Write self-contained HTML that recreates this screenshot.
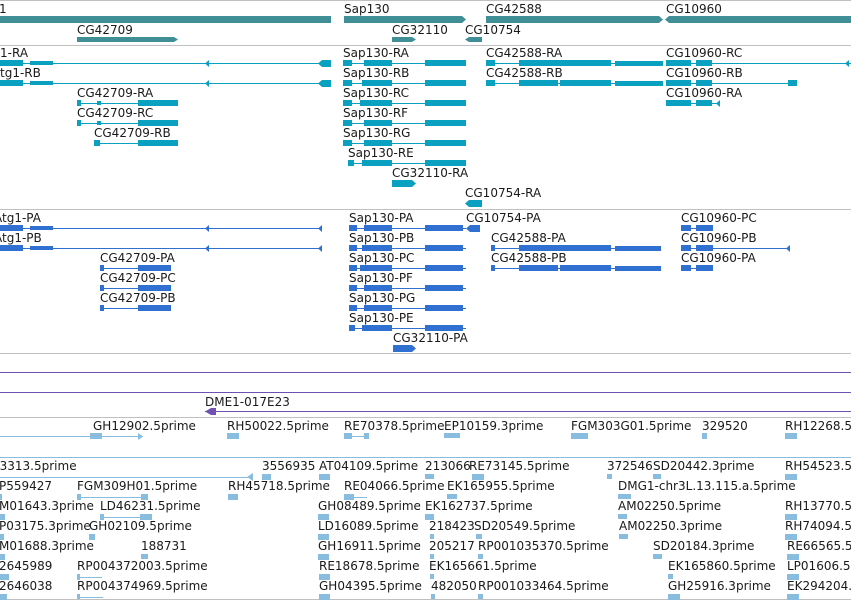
<!DOCTYPE html>
<html><head><meta charset="utf-8"><style>
html,body{margin:0;padding:0;background:#fff;width:851px;height:601px;overflow:hidden}
svg{display:block}
text{font-family:"DejaVu Sans","Liberation Sans",sans-serif;font-size:12px;fill:#1a1a1a}
.g{fill:#418f96}.t1{fill:#0aa0c0}.t2{fill:#3070d0}.e{fill:#88bde0}.p{fill:#7050b0}
</style></head><body>
<svg width="851" height="601" viewBox="0 0 851 601" xmlns="http://www.w3.org/2000/svg">
<g fill="#c0c0c0">
<rect x="0" y="0" width="851" height="1"/><rect x="0" y="45" width="851" height="1"/>
<rect x="0" y="209" width="851" height="1"/><rect x="0" y="353" width="851" height="1"/>
<rect x="0" y="417" width="851" height="1"/><rect x="0" y="599" width="851" height="1"/>
</g>
<!-- genes -->
<text x="-1" y="13">1</text><text x="344" y="13">Sap130</text><text x="486" y="13">CG42588</text><text x="666" y="13">CG10960</text>
<text x="77" y="34">CG42709</text><text x="392" y="34">CG32110</text><text x="465" y="34">CG10754</text>
<g class="g">
<rect x="0" y="16" width="331" height="7"/>
<polygon points="344,16 462,16 466,19.5 462,23 344,23"/>
<polygon points="486,16 659,16 663,19.5 659,23 486,23"/>
<polygon points="669,16 851,16 851,23 669,23 665,19.5"/>
<polygon points="77,37 174,37 178,39.5 174,42 77,42"/>
<polygon points="392,37 412,37 416,39.5 412,42 392,42"/>
<polygon points="469,37 482,37 482,42 469,42 465,39.5"/>
</g>
<!-- track 1 -->
<g>
<text x="0" y="57">1-RA</text><text x="0" y="77">tg1-RB</text>
<text x="77" y="97">CG42709-RA</text><text x="77" y="117">CG42709-RC</text><text x="94" y="137">CG42709-RB</text>
<text x="343" y="57">Sap130-RA</text><text x="343" y="77">Sap130-RB</text><text x="343" y="97">Sap130-RC</text><text x="343" y="117">Sap130-RF</text><text x="343" y="137">Sap130-RG</text><text x="348" y="157">Sap130-RE</text>
<text x="392" y="177">CG32110-RA</text><text x="465" y="197">CG10754-RA</text>
<text x="486" y="57">CG42588-RA</text><text x="486" y="77">CG42588-RB</text>
<text x="666" y="57">CG10960-RC</text><text x="666" y="77">CG10960-RB</text><text x="666" y="97">CG10960-RA</text>
</g>
<g class="t1">
<rect x="0" y="63" width="331" height="1"/><rect x="0" y="60" width="23" height="6"/><rect x="30" y="61" width="23" height="4"/><polygon points="205,63.5 209,60 209,67"/><polygon points="322,60 331,60 331,67 322,67 318,63.5"/>
<rect x="0" y="83" width="331" height="1"/><rect x="0" y="80" width="23" height="6"/><rect x="30" y="81" width="23" height="4"/><polygon points="205,83.5 209,80 209,87"/><polygon points="322,80 331,80 331,87 322,87 318,83.5"/>
<rect x="77" y="103" width="101" height="1"/><rect x="77" y="100" width="4" height="6"/><rect x="97" y="101" width="4" height="4"/><rect x="138" y="100" width="40" height="6"/>
<rect x="77" y="123" width="101" height="1"/><rect x="77" y="120" width="4" height="6"/><rect x="97" y="121" width="4" height="4"/><rect x="138" y="120" width="40" height="6"/>
<rect x="94" y="143" width="84" height="1"/><rect x="94" y="140" width="6" height="6"/><rect x="138" y="140" width="40" height="6"/>
<rect x="343" y="63" width="123" height="1"/><rect x="343" y="60" width="9" height="6"/><rect x="364" y="60" width="28" height="6"/><rect x="425" y="60" width="41" height="6"/>
<rect x="343" y="83" width="123" height="1"/><rect x="343" y="80" width="9" height="6"/><rect x="362" y="80" width="30" height="6"/><rect x="425" y="80" width="41" height="6"/>
<rect x="343" y="103" width="123" height="1"/><rect x="343" y="100" width="9" height="6"/><rect x="360" y="100" width="32" height="6"/><rect x="425" y="100" width="41" height="6"/>
<rect x="343" y="123" width="123" height="1"/><rect x="343" y="120" width="9" height="6"/><rect x="364" y="120" width="28" height="6"/><rect x="425" y="120" width="41" height="6"/>
<rect x="343" y="143" width="123" height="1"/><rect x="343" y="140" width="9" height="6"/><rect x="364" y="140" width="28" height="6"/><rect x="425" y="140" width="41" height="6"/>
<rect x="348" y="163" width="118" height="1"/><rect x="348" y="160" width="6" height="6"/><rect x="362" y="160" width="30" height="6"/><rect x="425" y="160" width="41" height="6"/>
<polygon points="392,180 412,180 416,183.5 412,187 392,187"/>
<polygon points="469,200 482,200 482,207 469,207 465,203.5"/>
<rect x="486" y="63" width="177" height="1"/><rect x="486" y="60" width="9" height="6"/><rect x="519" y="60" width="92" height="6"/><rect x="615" y="61" width="48" height="5"/>
<rect x="486" y="83" width="177" height="1"/><rect x="486" y="80" width="9" height="6"/><rect x="519" y="80" width="39" height="6"/><rect x="560" y="80" width="51" height="6"/><rect x="615" y="81" width="48" height="5"/>
<rect x="666" y="63" width="185" height="1"/><rect x="666" y="60" width="25" height="6"/><rect x="696" y="60" width="16" height="6"/><polygon points="845,63.5 849,60 849,67"/>
<rect x="666" y="83" width="131" height="1"/><rect x="666" y="80" width="25" height="6"/><rect x="696" y="80" width="16" height="6"/><rect x="788" y="80" width="9" height="6"/>
<rect x="666" y="103" width="54" height="1"/><rect x="666" y="100" width="25" height="6"/><rect x="696" y="100" width="16" height="6"/><polygon points="716,103.5 720,100 720,107"/>
</g>
<!-- track 2 -->
<g>
<text x="-6" y="222">Atg1-PA</text><text x="-6" y="242">Atg1-PB</text>
<text x="100" y="262">CG42709-PA</text><text x="100" y="282">CG42709-PC</text><text x="100" y="302">CG42709-PB</text>
<text x="349" y="222">Sap130-PA</text><text x="349" y="242">Sap130-PB</text><text x="349" y="262">Sap130-PC</text><text x="349" y="282">Sap130-PF</text><text x="349" y="302">Sap130-PG</text><text x="349" y="322">Sap130-PE</text>
<text x="393" y="342">CG32110-PA</text><text x="466" y="222">CG10754-PA</text>
<text x="491" y="242">CG42588-PA</text><text x="491" y="262">CG42588-PB</text>
<text x="681" y="222">CG10960-PC</text><text x="681" y="242">CG10960-PB</text><text x="681" y="262">CG10960-PA</text>
</g>
<g class="t2">
<rect x="0" y="228" width="322" height="1"/><rect x="0" y="225" width="23" height="6"/><rect x="30" y="226" width="23" height="4"/><polygon points="205,228.5 209,225 209,232"/><polygon points="318,228.5 322,225 322,232"/>
<rect x="0" y="248" width="322" height="1"/><rect x="0" y="245" width="23" height="6"/><rect x="30" y="246" width="23" height="4"/><polygon points="205,248.5 209,245 209,252"/><polygon points="318,248.5 322,245 322,252"/>
<rect x="100" y="268" width="71" height="1"/><rect x="100" y="265" width="4" height="6"/><rect x="138" y="265" width="33" height="6"/>
<rect x="100" y="288" width="71" height="1"/><rect x="100" y="285" width="4" height="6"/><rect x="138" y="285" width="33" height="6"/>
<rect x="100" y="308" width="71" height="1"/><rect x="100" y="305" width="4" height="6"/><rect x="138" y="305" width="33" height="6"/>
<rect x="349" y="228" width="117" height="1"/><rect x="349" y="225" width="8" height="6"/><rect x="364" y="225" width="28" height="6"/><rect x="425" y="225" width="38" height="6"/>
<rect x="349" y="248" width="117" height="1"/><rect x="349" y="245" width="8" height="6"/><rect x="362" y="245" width="30" height="6"/><rect x="425" y="245" width="38" height="6"/>
<rect x="349" y="268" width="117" height="1"/><rect x="349" y="265" width="8" height="6"/><rect x="360" y="265" width="32" height="6"/><rect x="425" y="265" width="38" height="6"/>
<rect x="349" y="288" width="117" height="1"/><rect x="349" y="285" width="8" height="6"/><rect x="364" y="285" width="28" height="6"/><rect x="425" y="285" width="38" height="6"/>
<rect x="349" y="308" width="117" height="1"/><rect x="349" y="305" width="8" height="6"/><rect x="364" y="305" width="28" height="6"/><rect x="425" y="305" width="38" height="6"/>
<rect x="349" y="328" width="117" height="1"/><rect x="349" y="325" width="6" height="6"/><rect x="362" y="325" width="30" height="6"/><rect x="425" y="325" width="38" height="6"/>
<polygon points="393,345 412,345 416,348.5 412,352 393,352"/>
<polygon points="470,225 480,225 480,232 470,232 466,228.5"/>
<rect x="491" y="248" width="170" height="1"/><rect x="491" y="245" width="4" height="6"/><rect x="519" y="245" width="92" height="6"/><rect x="615" y="246" width="46" height="5"/>
<rect x="491" y="268" width="170" height="1"/><rect x="491" y="265" width="4" height="6"/><rect x="519" y="265" width="39" height="6"/><rect x="560" y="265" width="51" height="6"/><rect x="615" y="266" width="46" height="5"/>
<rect x="681" y="228" width="32" height="1"/><rect x="681" y="225" width="10" height="6"/><rect x="696" y="225" width="17" height="6"/>
<rect x="681" y="248" width="109" height="1"/><rect x="681" y="245" width="10" height="6"/><rect x="696" y="245" width="17" height="6"/><polygon points="786,248.5 790,245 790,252"/>
<rect x="681" y="268" width="32" height="1"/><rect x="681" y="265" width="10" height="6"/><rect x="696" y="265" width="17" height="6"/>
</g>
<!-- purple -->
<g class="p">
<rect x="0" y="372" width="851" height="1"/><rect x="0" y="392" width="851" height="1"/>
<rect x="205" y="411" width="646" height="1"/><polygon points="205,411.5 211,408 216,408 216,415 211,415"/>
</g>
<text x="205" y="406">DME1-017E23</text>
<!-- ESTs -->
<g>
<text x="93" y="430">GH12902.5prime</text><text x="227" y="430">RH50022.5prime</text><text x="344" y="430">RE70378.5prime</text><text x="444" y="430">EP10159.3prime</text><text x="571" y="430">FGM303G01.5prime</text><text x="702" y="430">329520</text><text x="785" y="430">RH12268.5prime</text>
<text x="-8" y="470">03313.5prime</text><text x="262" y="470">3556935</text><text x="319" y="470">AT04109.5prime</text><text x="425" y="470">213066</text><text x="469" y="470">RE73145.5prime</text><text x="607" y="470">372546</text><text x="653" y="470">SD20442.3prime</text><text x="785" y="470">RH54523.5prime</text>
<text x="-1" y="490">P559427</text><text x="77" y="490">FGM309H01.5prime</text><text x="228" y="490">RH45718.5prime</text><text x="344" y="490">RE04066.5prime</text><text x="447" y="490">EK165955.5prime</text><text x="618" y="490">DMG1-chr3L.13.115.a.5prime</text>
<text x="-1" y="510">M01643.3prime</text><text x="100" y="510">LD46231.5prime</text><text x="318" y="510">GH08489.5prime</text><text x="425" y="510">EK162737.5prime</text><text x="618" y="510">AM02250.5prime</text><text x="785" y="510">RH13770.5prime</text>
<text x="-1" y="530">P03175.3prime</text><text x="89" y="530">GH02109.5prime</text><text x="318" y="530">LD16089.5prime</text><text x="429" y="530">218423</text><text x="474" y="530">SD20549.5prime</text><text x="619" y="530">AM02250.3prime</text><text x="785" y="530">RH74094.5prime</text>
<text x="-1" y="550">M01688.3prime</text><text x="141" y="550">188731</text><text x="318" y="550">GH16911.5prime</text><text x="429" y="550">205217</text><text x="478" y="550">RP001035370.5prime</text><text x="653" y="550">SD20184.3prime</text><text x="787" y="550">RE66565.5prime</text>
<text x="-1" y="570">2645989</text><text x="77" y="570">RP004372003.5prime</text><text x="319" y="570">RE18678.5prime</text><text x="429" y="570">EK165661.5prime</text><text x="668" y="570">EK165860.5prime</text><text x="787" y="570">LP01606.5prime</text>
<text x="-1" y="590">2646038</text><text x="77" y="590">RP004374969.5prime</text><text x="319" y="590">GH04395.5prime</text><text x="431" y="590">482050</text><text x="478" y="590">RP001033464.5prime</text><text x="668" y="590">GH25916.3prime</text><text x="787" y="590">EK294204.5prime</text>
</g>
<g class="e">
<rect x="0" y="436" width="143" height="1"/><rect x="90" y="433" width="12" height="6"/><polygon points="138,433 143,436.5 138,440"/>
<rect x="227" y="433" width="12" height="6"/><rect x="344" y="436" width="25" height="1"/><rect x="344" y="433" width="8" height="6"/><rect x="364" y="433" width="5" height="6"/>
<rect x="444" y="433" width="16" height="5"/><rect x="571" y="433" width="17" height="6"/><rect x="702" y="433" width="5" height="6"/><rect x="785" y="433" width="12" height="6"/>
<rect x="0" y="457" width="851" height="1"/>
<rect x="0" y="477" width="253" height="1"/><polygon points="253,473 253,481 247,477"/><rect x="262" y="474" width="9" height="6"/><rect x="319" y="474" width="11" height="6"/><rect x="425" y="474" width="9" height="5"/><rect x="472" y="474" width="12" height="6"/><rect x="607" y="474" width="5" height="5"/><rect x="653" y="474" width="8" height="5"/><rect x="785" y="474" width="12" height="6"/>
<rect x="0" y="494" width="2" height="6"/><rect x="77" y="497" width="70" height="1"/><rect x="77" y="494" width="4" height="6"/><rect x="141" y="494" width="7" height="6"/><rect x="228" y="494" width="10" height="6"/><rect x="344" y="497" width="23" height="1"/><rect x="344" y="494" width="10" height="6"/><rect x="447" y="494" width="10" height="5"/><rect x="618" y="494" width="13" height="5"/>
<rect x="0" y="514" width="5" height="6"/><rect x="100" y="517" width="52" height="1"/><rect x="100" y="514" width="4" height="6"/><rect x="140" y="514" width="12" height="6"/><rect x="318" y="514" width="11" height="6"/><rect x="425" y="514" width="9" height="6"/><rect x="618" y="514" width="9" height="5"/><rect x="785" y="514" width="12" height="6"/>
<rect x="0" y="534" width="4" height="6"/><rect x="89" y="534" width="6" height="6"/><rect x="318" y="534" width="11" height="6"/><rect x="430" y="534" width="4" height="5"/><rect x="476" y="534" width="6" height="5"/><rect x="619" y="534" width="9" height="5"/><rect x="785" y="534" width="12" height="6"/>
<rect x="0" y="554" width="5" height="6"/><rect x="141" y="554" width="7" height="5"/><rect x="318" y="554" width="11" height="6"/><rect x="430" y="554" width="4" height="5"/><rect x="478" y="554" width="5" height="5"/><rect x="653" y="554" width="9" height="5"/><rect x="787" y="554" width="12" height="6"/>
<rect x="0" y="574" width="9" height="6"/><rect x="77" y="577" width="25" height="1"/><rect x="77" y="574" width="3" height="6"/><rect x="319" y="574" width="11" height="6"/><rect x="430" y="574" width="4" height="5"/><rect x="668" y="574" width="5" height="5"/><rect x="787" y="574" width="12" height="6"/>
<rect x="0" y="594" width="7" height="6"/><rect x="77" y="597" width="26" height="1"/><rect x="77" y="594" width="3" height="5"/><rect x="319" y="594" width="11" height="6"/><rect x="431" y="594" width="4" height="5"/><rect x="478" y="594" width="5" height="5"/><rect x="668" y="594" width="12" height="6"/><rect x="787" y="594" width="12" height="6"/>
</g>
</svg>
</body></html>
